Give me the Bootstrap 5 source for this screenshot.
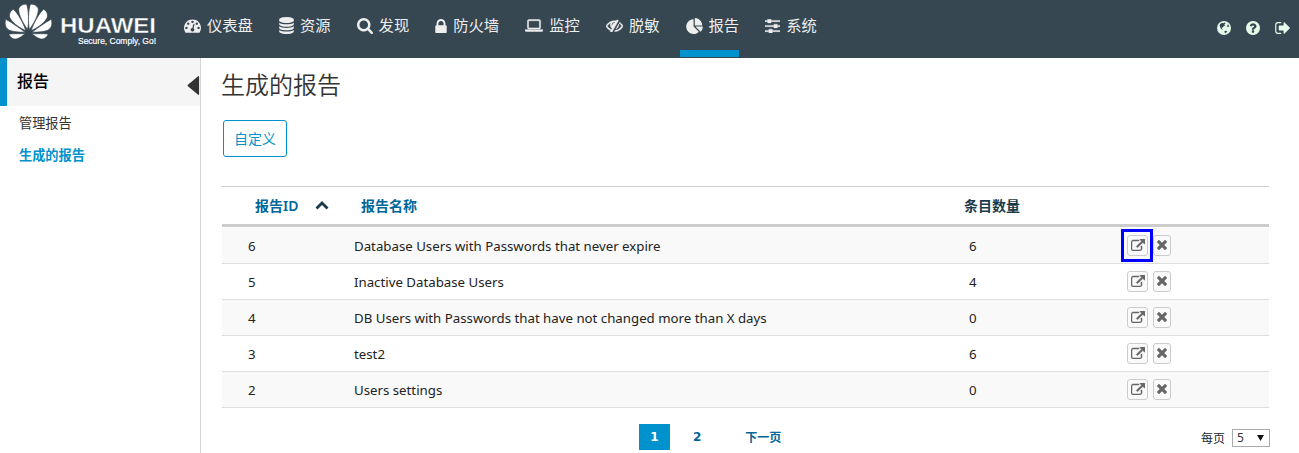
<!DOCTYPE html>
<html lang="zh-CN">
<head>
<meta charset="utf-8">
<title>生成的报告</title>
<meta name="viewport" content="width=device-width, initial-scale=1">
<link rel="stylesheet" href="https://cdn.jsdelivr.net/npm/bootstrap@5.3.0/dist/css/bootstrap.min.css">
<style>
body{font-family:"Noto Sans","Noto Sans CJK SC",sans-serif;font-size:13px;line-height:20px;color:#222;background:#fff;height:453px;overflow:hidden}
svg{display:block;fill:currentColor;flex:none}
.topbar{height:58px;background:#364752;color:#eee}
.brand-box{width:184px;padding:4px 0 0 5px}
.main-menu{gap:26.05px}
.main-menu .nav-link{position:relative;height:58px;padding:0 0 10px;gap:6px;color:#eee;font:15.3px/20px "Noto Sans CJK SC",sans-serif;white-space:nowrap}
.main-menu .nav-link>svg{margin-top:3px}
.main-menu .nav-link.active::after{content:"";position:absolute;left:-6px;right:0;bottom:1px;height:7px;background:#0092cc}
.tools{gap:15px;color:#e6fbe9;padding:0 9px 2px 0}
.side{width:201px;border-right:1px solid #d5d5d5;height:395px}
.side-head{height:48px;background:#f5f5f5;border-left:7px solid #0092cc;font-size:16px;font-weight:500;color:#000;padding:0 0 2px 10px}
.side-link{display:block;padding-left:19px;height:32px;line-height:32px;color:#333;text-decoration:none;font-size:13.2px}
.side-link.active{color:#0092cc;font-weight:700}
.page{padding:11px 30px 0 21px}
.page h1{font-size:24px;line-height:32px;font-weight:350;color:#333;margin:0 0 19px -1px}
.btn-custom{border:1px solid #0092cc;color:#0092cc;border-radius:3px;width:64px;height:37px;padding:0;font-size:14px;margin-left:1px}
.report-table{margin:29px 0 0;border-top:1px solid #ccc;table-layout:fixed;width:1047px}
.report-table>thead>tr>th{height:39px;padding:0;border-bottom:3px solid #ccc;color:#1a3a4a;font-size:14px;vertical-align:middle;background:none;font-weight:600}
.report-table>thead>tr>th.sortable{color:#069}
.report-table>tbody>tr>td{height:36px;padding:0;border-bottom:1px solid #ddd;vertical-align:middle;font-size:13.25px;color:#222;box-shadow:none}
.report-table>tbody>tr:nth-child(odd)>td{background:#f9f9f9}
.report-table>tbody>tr:first-child>td{height:38px;box-shadow:inset 0 1px #fff;padding-top:1px}
.icon-btn{display:flex;align-items:center;justify-content:center;width:21px;height:21px;border:1px solid #ccc;border-radius:3px;background:#fafafa;color:#666;padding:0;margin-top:-1px}
.icon-btn.narrow{width:18px}
.marked{position:relative}
.marked::after{content:"";position:absolute;left:-7px;top:-7px;width:32px;height:33px;border:3px solid #00f}
.pager{height:26px;color:#069;font-weight:700;font-size:12px;margin-top:16px}
.pager .digit{font-family:"DejaVu Sans",sans-serif}
.pager .page-now{width:31px;height:26px;background:#0092cc;color:#fff;margin-left:417px}
.per-page{width:38px;height:18px;margin:1px -1px 0 7px;border:1px solid #aaa;border-radius:0;font-size:12px;line-height:16px;padding:0 5px 0 4px;color:#333}
</style>
</head>
<body>
<svg class="d-none">
<symbol id="i-dash" viewBox="0 128 1792 1536"><path d="M384 1152q0-53-37.5-90.5t-90.5-37.5-90.5 37.5-37.5 90.5 37.5 90.5 90.5 37.5 90.5-37.5 37.5-90.5zm192-448q0-53-37.5-90.5t-90.5-37.5-90.5 37.5-37.5 90.5 37.5 90.5 90.5 37.5 90.5-37.5 37.5-90.5zm428 481l101-382q6-26-7.5-48.5t-38.5-29.5-48 6.5-30 39.5l-101 382q-60 5-107 43.5t-63 98.5q-20 77 20 146t117 89 146-20 89-117q16-60-6-117t-72-91zm660-33q0-53-37.5-90.5t-90.5-37.5-90.5 37.5-37.5 90.5 37.5 90.5 90.5 37.5 90.5-37.5 37.5-90.5zm-640-640q0-53-37.5-90.5t-90.5-37.5-90.5 37.5-37.5 90.5 37.5 90.5 90.5 37.5 90.5-37.5 37.5-90.5zm448 192q0-53-37.5-90.5t-90.5-37.5-90.5 37.5-37.5 90.5 37.5 90.5 90.5 37.5 90.5-37.5 37.5-90.5zm320 448q0 261-141 483-19 29-54 29h-1402q-35 0-54-29-141-221-141-483 0-182 71-348t191-286 286-191 348-71 348 71 286 191 191 286 71 348z"/></symbol>
<symbol id="i-db" viewBox="128 0 1536 1792"><path d="M896 768q237 0 443-43t325-127v170q0 69-103 128t-280 93.500-385 34.500-385-34.500-280-93.500-103-128v-170q119 84 325 127t443 43zm0 768q237 0 443-43t325-127v170q0 69-103 128t-280 93.500-385 34.500-385-34.500-280-93.500-103-128v-170q119 84 325 127t443 43zm0-384q237 0 443-43t325-127v170q0 69-103 128t-280 93.500-385 34.500-385-34.500-280-93.500-103-128v-170q119 84 325 127t443 43zm0-1152q208 0 385 34.500t280 93.500 103 128v128q0 69-103 128t-280 93.500-385 34.500-385-34.500-280-93.500-103-128v-128q0-69 103-128t280-93.500 385-34.500z"/></symbol>
<symbol id="i-search" viewBox="64 128 1664 1664"><path d="M1216 832q0-185-131.500-316.500t-316.500-131.500-316.500 131.500-131.500 316.500 131.500 316.500 316.500 131.500 316.500-131.500 131.500-316.500zm512 832q0 52-38 90t-90 38q-54 0-90-38l-343-342q-179 124-399 124-143 0-273.500-55.500t-225-150-150-225-55.500-273.500 55.500-273.500 150-225 225-150 273.500-55.500 273.500 55.500 225 150 150 225 55.500 273.500q0 220-124 399l343 343q37 37 37 90z"/></symbol>
<symbol id="i-lock" viewBox="320 128 1152 1408"><path d="M640 768h512v-192q0-106-75-181t-181-75-181 75-75 181v192zm832 96v576q0 40-28 68t-68 28h-960q-40 0-68-28t-28-68v-576q0-40 28-68t68-28h32v-192q0-184 132-316t316-132 316 132 132 316v192h32q40 0 68 28t28 68z"/></symbol>
<symbol id="i-laptop" viewBox="0 256 1920 1280"><path stroke="currentColor" stroke-width="50" d="M416 1280q-66 0-113-47t-47-113v-704q0-66 47-113t113-47h1088q66 0 113 47t47 113v704q0 66-47 113t-113 47h-1088zm-32-864v704q0 13 9.500 22.500t22.500 9.500h1088q13 0 22.500-9.500t9.500-22.500v-704q0-13-9.500-22.500t-22.500-9.500h-1088q-13 0-22.500 9.500t-9.500 22.500zm1376 928h160v96q0 40-47 68t-113 28h-1600q-66 0-113-28t-47-68v-96h1760zm-720 96q16 0 16-16t-16-16h-160q-16 0-16 16t16 16h160z"/></symbol>
<symbol id="i-eye" viewBox="0 256 1792 1280"><path stroke="currentColor" stroke-width="40" d="M555 1335l78-141q-87-63-136-159t-49-203q0-121 61-225-229 117-381 353 167 258 427 375zm389-759q0-20-14-34t-34-14q-125 0-214.500 89.500t-89.500 214.500q0 20 14 34t34 14 34-14 14-34q0-86 61-147t147-61q20 0 34-14t14-34zm363-191q0 7-1 9-106 189-316 567t-315 566l-49 89q-10 16-28 16-12 0-134-70-16-10-16-28 0-12 44-87-143-65-263.500-173t-208.500-245q-20-31-20-69t20-69q153-235 380-371t496-136q89 0 180 17l54-97q10-16 28-16 5 0 18 6t31 15.500 33 18.500 31.500 18.500 19.500 11.500q16 10 16 27zm37 447q0 139-79 253.500t-209 164.500l280-502q8 45 8 84zm448 128q0 35-20 69-39 64-109 145-150 172-347.500 267t-419.500 95l74-132q212-18 392.500-137t301.500-307q-115-179-282-294l63-112q95 64 182.500 153t144.500 184q20 34 20 69z"/></symbol>
<symbol id="i-pie" viewBox="0 0 1728 1664"><path d="M768 890l546 546q-106 108-247.500 168t-298.500 60q-209 0-385.500-103t-279.500-279.500-103-385.500 103-385.500 279.500-279.500 385.500-103v762zm187 6h773q0 157-60 298.500t-168 247.500zm709-128h-768v-768q209 0 385.500 103t279.500 279.500 103 385.500z"/></symbol>
<symbol id="i-sliders" viewBox="0 256 1536 1408"><path stroke="currentColor" stroke-width="40" d="M352 1408v128h-352v-128h352zm352-128q26 0 45 19t19 45v256q0 26-19 45t-45 19h-256q-26 0-45-19t-19-45v-256q0-26 19-45t45-19h256zm160-384v128h-864v-128h864zm-640-512v128h-224v-128h224zm1312 1024v128h-736v-128h736zm-960-1152q26 0 45 19t19 45v256q0 26-19 45t-45 19h-256q-26 0-45-19t-19-45v-256q0-26 19-45t45-19h256zm640 512q26 0 45 19t19 45v256q0 26-19 45t-45 19h-256q-26 0-45-19t-19-45v-256q0-26 19-45t45-19h256zm320 128v128h-224v-128h224zm0-512v128h-864v-128h864z"/></symbol>
<symbol id="i-help" viewBox="128 128 1536 1536"><path d="M1024 1376v-192q0-14-9-23t-23-9h-192q-14 0-23 9t-9 23v192q0 14 9 23t23 9h192q14 0 23-9t9-23zm256-672q0-88-55.500-163t-138.500-116-170-41q-243 0-371 213-15 24 8 42l132 100q7 6 19 6 16 0 25-12 53-68 86-92 34-24 86-24 48 0 85.500 26t37.500 59q0 38-20 61t-68 45q-63 28-115.500 86.500t-52.500 125.500v36q0 14 9 23t23 9h192q14 0 23-9t9-23q0-19 21.500-49.500t54.500-49.500q32-18 49-28.500t46-35 44.500-48 28-60.500 12.500-81zm384 192q0 209-103 385.500t-279.500 279.500-385.500 103-385.500-103-279.500-279.500-103-385.500 103-385.500 279.500-279.500 385.500-103 385.500 103 279.500 279.500 103 385.500z"/></symbol>
<symbol id="i-out" viewBox="64 256 1568 1280"><path d="M704 1440q0 4 1 20t.5 26.500-3 23.500-10 19.500-20.500 6.500h-320q-119 0-203.500-84.500t-84.500-203.500v-704q0-119 84.500-203.500t203.500-84.500h320q13 0 22.500 9.500t9.500 22.500q0 4 1 20t.5 26.500-3 23.500-10 19.500-20.500 6.500h-320q-66 0-113 47t-47 113v704q0 66 47 113t113 47h312l11.500 1 11.500 3 8 5.500 7 9 2 13.500zm928-544q0 26-19 45l-544 544q-19 19-45 19t-45-19-19-45v-288h-448q-26 0-45-19t-19-45v-384q0-26 19-45t45-19h448v-288q0-26 19-45t45-19 45 19l544 544q19 19 19 45z"/></symbol>
<symbol id="i-ext" viewBox="64 61 1792 1536"><path stroke="currentColor" stroke-width="70" d="M1472 989v320q0 119-84.500 203.500t-203.500 84.500h-832q-119 0-203.500-84.500t-84.500-203.500v-832q0-119 84.500-203.500t203.500-84.500h704q14 0 23 9t9 23v64q0 14-9 23t-23 9h-704q-66 0-113 47t-47 113v832q0 66 47 113t113 47h832q66 0 113-47t47-113v-320q0-14 9-23t23-9h64q14 0 23 9t9 23zm384-864v512q0 26-19 45t-45 19-45-19l-176-176-652 652q-10 10-23 10t-23-10l-114-114q-10-10-10-23t10-23l652-652-176-176q-19-19-19-45t19-45 45-19h512q26 0 45 19t19 45z"/></symbol>
<symbol id="i-x" viewBox="302 366 1188 1188"><path d="M1490 1322q0 40-28 68l-136 136q-28 28-68 28t-68-28l-294-294-294 294q-28 28-68 28t-68-28l-136-136q-28-28-28-68t28-68l294-294-294-294q-28-28-28-68t28-68l136-136q28-28 68-28t68 28l294 294 294-294q28-28 68-28t68 28l136 136q28 28 28 68t-28 68l-294 294 294 294q28 28 28 68z"/></symbol>
</svg>

<header class="topbar d-flex">
  <div class="brand-box">
    <svg width="155" height="44" viewBox="5 4 155 44" fill="#fff" color="#fff">
      <g id="petals" stroke="#364752" stroke-width=".7">
        <path d="M27.600 29.500C29 23 28.800 10 26.600 4.200 22.500 4 19 6 18.700 9.500 18.500 15 23.500 24 27.600 29.500z"/>
        <path d="M25.800 30.700C23.500 23 18 13.500 13.300 9.200 9.500 11.500 8.600 15.500 10.300 18.500 13 23.500 20 28 25.800 30.700z"/>
        <path d="M25 32.200C19.500 28 11 22 5.700 19.200 4.300 24 5.500 28.500 9.500 30.300 13.500 32 20 32.300 25 32.200z"/>
        <path d="M25.200 33.800C20 33.600 13 33.700 8.800 33.900 10.500 38 13.500 39.700 17 38.800 20 37.800 23 35.500 25.200 33.800z"/>
      </g>
      <use href="#petals" transform="translate(57 0) scale(-1 1)"/>
      <text x="60" y="33" font-family="Liberation Sans" font-weight="700" font-size="21.500" textLength="96" lengthAdjust="spacingAndGlyphs" stroke="#364752" stroke-width=".4">HUAWEI</text>
      <text x="78" y="44" font-family="Liberation Sans" font-size="9" textLength="78" lengthAdjust="spacingAndGlyphs" stroke="#fff" stroke-width=".2">Secure, Comply, Go!</text>
    </svg>
  </div>
  <nav class="main-menu nav flex-nowrap">
    <a class="nav-link d-flex align-items-center" href="#"><svg width="17" height="15"><use href="#i-dash"/></svg><span>仪表盘</span></a>
    <a class="nav-link d-flex align-items-center" href="#"><svg width="15" height="17"><use href="#i-db"/></svg><span>资源</span></a>
    <a class="nav-link d-flex align-items-center" href="#"><svg width="16" height="16"><use href="#i-search"/></svg><span>发现</span></a>
    <a class="nav-link d-flex align-items-center" href="#"><svg width="12" height="14"><use href="#i-lock"/></svg><span>防火墙</span></a>
    <a class="nav-link d-flex align-items-center" href="#"><svg width="18" height="13"><use href="#i-laptop"/></svg><span>监控</span></a>
    <a class="nav-link d-flex align-items-center" href="#"><svg width="17" height="13"><use href="#i-eye"/></svg><span>脱敏</span></a>
    <a class="nav-link active d-flex align-items-center" href="#"><svg width="17" height="16"><use href="#i-pie"/></svg><span>报告</span></a>
    <a class="nav-link d-flex align-items-center" href="#"><svg width="15" height="14"><use href="#i-sliders"/></svg><span>系统</span></a>
  </nav>
  <div class="tools d-flex align-items-center ms-auto">
    <svg width="14" height="14" viewBox="0 0 14 14"><circle cx="7" cy="7" r="7"/><path fill="#364752" d="M3 3.200 5 1.800 6.600 2.300 7.800 1.500 8.600 2.600 7.300 3.600 8 4.700 6.600 5.200 5.800 6.500 4.600 6.600 5.300 7.900 6.200 8.300 5.600 8.600 4.200 7.900 3.100 6 2.600 4.500zM10.800 3.400 11.400 3.600 12.200 5.800 11.300 5.800 10.700 6.300 10.100 5.300zM7.400 10 9.300 9.800 10.300 10.500 9.300 11.600 7.900 12.200z"/></svg>
    <svg width="14" height="14"><use href="#i-help"/></svg>
    <svg width="15" height="12"><use href="#i-out"/></svg>
  </div>
</header>

<div class="d-flex">
  <aside class="side flex-shrink-0">
    <div class="side-head d-flex align-items-center justify-content-between"><span>报告</span>
      <svg class="mt-2" width="13" height="21" viewBox="0 0 14 21" fill="#333" color="#333"><path d="M12 .5Q13-.2 13 1.500V19.500Q13 21.200 12 20.500L1 11.300Q0 10.500 1 9.700z"/></svg>
    </div>
    <nav style="padding-top:1px">
      <a class="side-link" href="#">管理报告</a>
      <a class="side-link active" href="#">生成的报告</a>
    </nav>
  </aside>
  <main class="page flex-grow-1">
    <h1>生成的报告</h1>
    <button class="btn btn-custom d-block" type="button">自定义</button>
    <table class="table report-table">
      <colgroup><col style="width:132px"><col style="width:610px"><col style="width:163px"><col></colgroup>
      <thead><tr>
        <th class="sortable"><div class="d-flex align-items-center" style="padding-left:33px">报告ID<svg width="14" height="9" viewBox="0 0 14 9" style="margin-left:17px;fill:none;stroke:#1a3a4a;stroke-width:2.800"><path d="M1.500 7.500 7 2l5.500 5.500"/></svg></div></th>
        <th class="sortable"><span style="padding-left:7px">报告名称</span></th><th>条目数量</th><th></th>
      </tr></thead>
      <tbody id="rows"></tbody>
    </table>
    <div class="pager d-flex align-items-center">
      <span class="digit page-now d-flex align-items-center justify-content-center">1</span>
      <span class="digit" style="margin-left:23px">2</span>
      <span style="margin:2px 0 0 44px">下一页</span>
      <span class="fw-normal text-dark ms-auto pt-1">每页</span>
      <span class="per-page fw-normal d-flex justify-content-between align-items-center">5<svg width="7" height="6" viewBox="0 0 8 7" color="#111"><path d="M0 0h8L4 7z"/></svg></span>
    </div>
  </main>
</div>
<script src="https://cdn.jsdelivr.net/npm/bootstrap@5.3.0/dist/js/bootstrap.bundle.min.js"></script>
<script>
const reports=[[6,'Database Users with Passwords that never expire',6],[5,'Inactive Database Users',4],[4,'DB Users with Passwords that have not changed more than X days',0],[3,'test2',6],[2,'Users settings',0]];
document.getElementById('rows').innerHTML=reports.map(([id,name,count],i)=>`<tr><td><span style="padding-left:26px">${id}</span></td><td>${name}</td><td><span style="padding-left:5px">${count}</span></td><td><div class="d-flex" style="gap:5px"><button class="icon-btn${i?'':' marked'}"><svg width="14" height="12"><use href="#i-ext"/></svg></button><button class="icon-btn narrow"><svg width="10" height="10"><use href="#i-x"/></svg></button></div></td></tr>`).join('');
</script>
</body>
</html>
